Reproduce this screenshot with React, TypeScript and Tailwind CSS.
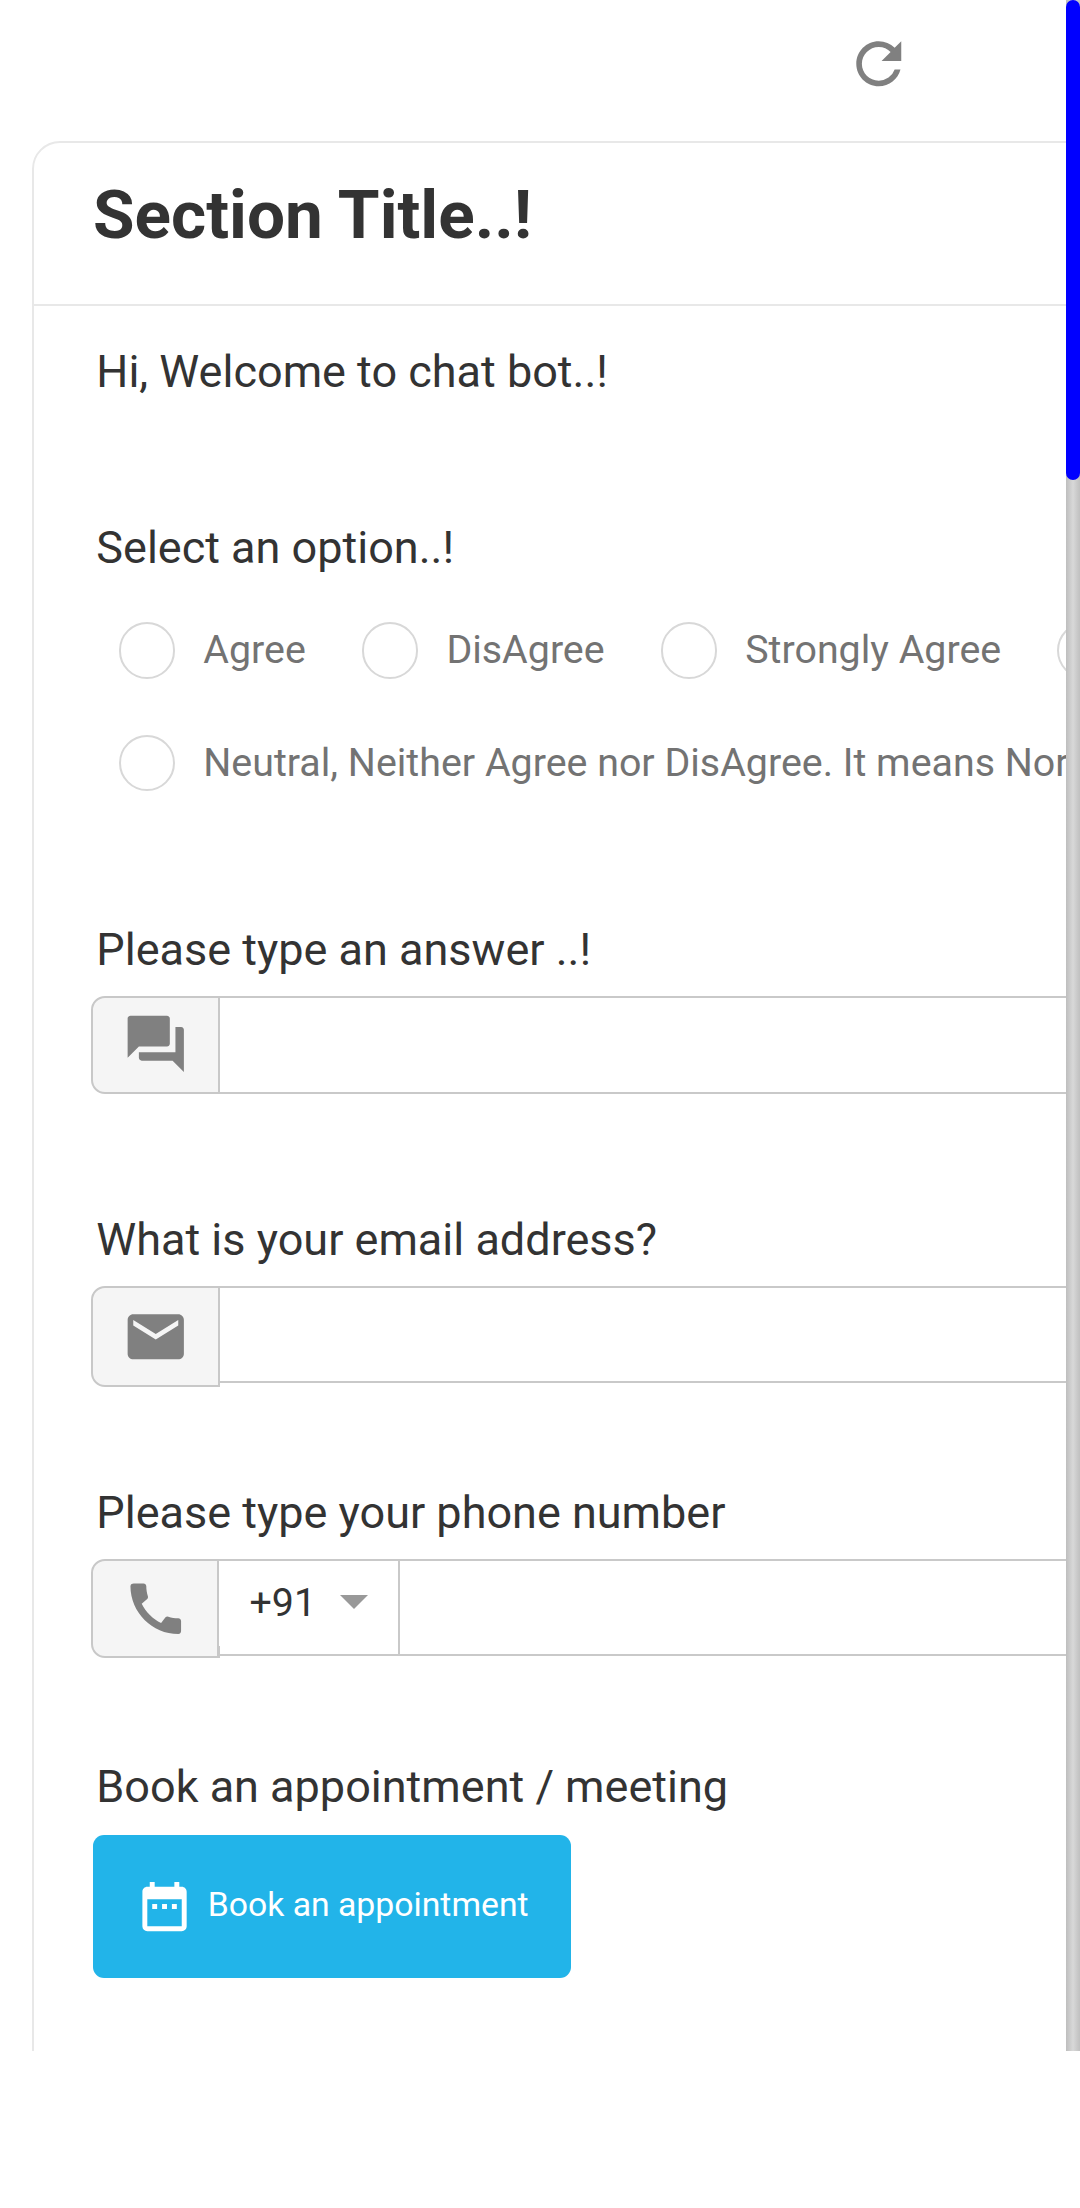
import type { ReactNode } from "react";
import { MdCall, MdDateRange, MdEmail, MdQuestionAnswer, MdRefresh } from "react-icons/md";

function Label({ children }: { children: ReactNode }) {
  return (
    <p className="pl-[5.3px] text-[45px] leading-[53px] whitespace-nowrap text-[#333]">{children}</p>
  );
}

function Radio({ children }: { children?: ReactNode }) {
  return (
    <label className="flex shrink-0 items-center gap-[28.125px]">
      <span className="size-[56.25px] shrink-0 rounded-full border-2 border-[#d8d8d8] bg-white" />
      <span className="h-[47px] -translate-y-[1px] text-[39.375px] leading-[47px] whitespace-nowrap text-[#737373]">
        {children}
      </span>
    </label>
  );
}

const addon =
  "shrink-0 rounded-l-[14px] border-2 border-[#c8c8c8] bg-[#f5f5f5] pl-[29px] text-[67.5px] text-[#808080]";

export default function App() {
  return (
    <div className="h-[2208px] w-[1080px] overflow-hidden bg-white font-['Roboto',sans-serif]">
      <div className="flex h-[2051px]">
        <main className="w-[1066px] shrink-0 overflow-hidden">
          <header className="flex h-[141px] pt-[29.75px] pl-[845px]">
            <MdRefresh className="text-[67.5px] text-[#808080]" />
          </header>

          <section className="ml-8 h-[1960px] w-[1200px] rounded-t-[28px] border-2 border-[#e8e8e8]">
            <div className="h-[163px] border-b-2 border-[#e8e8e8] pt-8 pl-[59px]">
              <h1 className="text-[67.5px] leading-[80px] font-bold whitespace-nowrap text-[#333]">
                Section Title..!
              </h1>
            </div>

            <div className="pt-[39px] pl-[57px]">
              <div className="h-[176px]">
                <Label>Hi, Welcome to chat bot..!</Label>
              </div>

              <div className="h-[402px]">
                <Label>Select an option..!</Label>
                <div className="flex flex-col gap-[56.25px] pt-[48.4px] pl-[27.9px]">
                  <div className="flex gap-[56.25px]">
                    <Radio>Agree</Radio>
                    <Radio>DisAgree</Radio>
                    <Radio>Strongly Agree</Radio>
                    <Radio />
                  </div>
                  <Radio>Neutral, Neither Agree nor DisAgree. It means Nor</Radio>
                </div>
              </div>

              <div className="h-[290px]">
                <Label>Please type an answer ..!</Label>
                <div className="mt-5 flex items-start">
                  <div className={`${addon} h-[98px] w-[129px] pt-[12.4px]`}>
                    <MdQuestionAnswer />
                  </div>
                  <div className="h-[98px] flex-1 border-y-2 border-[#c9c9c9]" />
                </div>
              </div>

              <div className="h-[273px]">
                <Label>What is your email address?</Label>
                <div className="mt-5 flex items-start">
                  <div className={`${addon} h-[101px] w-[129px] pt-[14.75px]`}>
                    <MdEmail />
                  </div>
                  <div className="h-[97px] flex-1 border-y-2 border-[#c9c9c9]" />
                </div>
              </div>

              <div className="h-[274px]">
                <Label>Please type your phone number</Label>
                <div className="mt-5 flex items-start">
                  <div className={`${addon} h-[99px] w-[128px] pt-[13.6px]`}>
                    <MdCall />
                  </div>
                  <div className="mt-[87px] h-3 w-px bg-[#c8c8c8]" />
                  <div className="-ml-px flex h-[97px] w-[181px] border-y-2 border-r-2 border-[#c9c9c9] pt-[18px] pl-[30.5px]">
                    <span className="w-[90.5px] text-[39.375px] leading-[47px] text-[#333]">+91</span>
                    <svg className="mt-4 h-[14px] w-7" viewBox="0 0 28 14" fill="#999">
                      <path d="M0 0h28L14 14z" />
                    </svg>
                  </div>
                  <div className="h-[97px] flex-1 border-y-2 border-[#c9c9c9]" />
                </div>
              </div>

              <div>
                <Label>Book an appointment / meeting</Label>
                <button className="mt-[22px] ml-[2px] flex h-[143px] w-[478px] rounded-[11px] bg-[#22b4e9] pl-[41.9px] text-white">
                  <MdDateRange className="mt-[42.1px] shrink-0 text-[59.06px]" />
                  <span className="mt-[50px] ml-[13.7px] text-[33.75px] leading-[39px] whitespace-nowrap">
                    Book an appointment
                  </span>
                </button>
              </div>
            </div>
          </section>
        </main>

        <div className="w-[14px] shrink-0 bg-linear-to-r from-[#bebebe] via-[#d8d8d8] to-[#c0c0c0]">
          <div className="h-[480px] rounded-full bg-[#00f]" />
        </div>
      </div>
    </div>
  );
}
